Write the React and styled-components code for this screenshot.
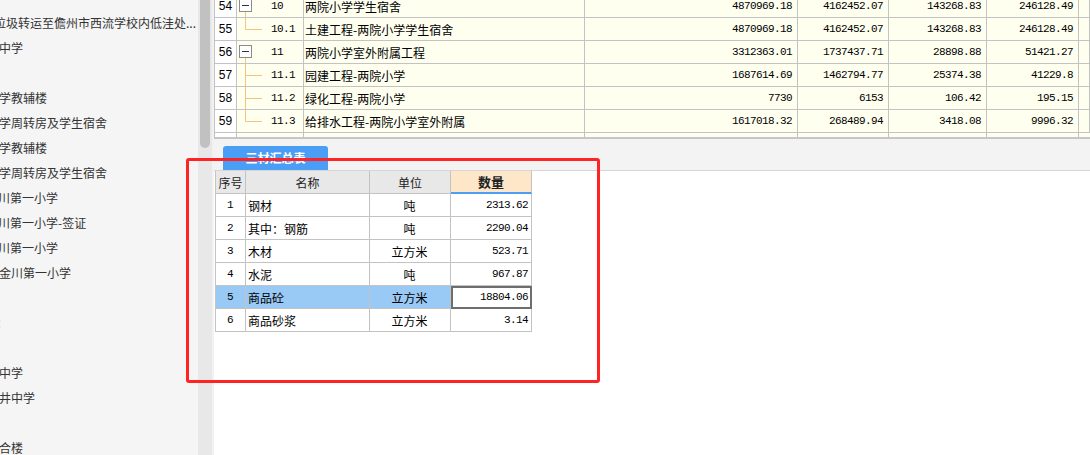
import React from 'react';
import styled, { createGlobalStyle } from 'styled-components';

const CJK = `"Noto Sans CJK SC", "Noto Sans", sans-serif`;
const MONO = `"Liberation Mono", "Noto Sans CJK SC", monospace`;
const GRID = '#c3c3c3';

const GlobalStyle = createGlobalStyle`
  html, body { margin: 0; padding: 0; background: #fff; }
  body { width: 1090px; height: 455px; overflow: hidden; font-family: ${CJK}; }
  * { box-sizing: border-box; }
`;

const Page = styled.div`
  position: relative;
  display: flex;
  width: 1090px;
  height: 455px;
  overflow: hidden;
`;

const Sidebar = styled.aside`
  width: 198px;
  height: 100%;
  flex-shrink: 0;
  background: #f5f5f5;
  overflow: hidden;
  padding-top: 10px;
`;

const SideItem = styled.div`
  height: 25px;
  font: 12px/25px ${CJK};
  color: ${p => (p.$accent ? '#3d8fe6' : '#333')};
  white-space: nowrap;
  margin-left: ${p => p.$indent || 0}px;
`;

const ScrollTrack = styled.div`
  width: 16px;
  height: 100%;
  flex-shrink: 0;
  background: #e8e8e8;
  border-right: 2px solid #f2f2f2;
  padding: 0 2px;
`;

const ScrollThumb = styled.div`
  height: 148px;
  background: #c1c1c1;
  border-radius: 0 0 5px 5px;
`;

const Main = styled.main`
  flex: 1;
  display: flex;
  flex-direction: column;
  background: #fff;
  min-width: 0;
`;

const TopPane = styled.section`
  height: 139px;
  flex-shrink: 0;
  overflow: hidden;
  background: #fffff0;
  border-left: 1px solid ${GRID};
  border-bottom: 2px solid #c6c6c6;
`;

const TopGrid = styled.div`
  margin-top: -5px;
  display: grid;
  grid-template-columns: 22px 67px 281px 213px 91px 98px 92px 1fr;
  grid-auto-rows: 23px;
`;

const Cell = styled.div`
  border-right: 1px solid ${GRID};
  border-bottom: 1px solid ${GRID};
  display: flex;
  align-items: center;
  white-space: nowrap;
  overflow: hidden;
  color: #000;
  &:last-child { border-right: none; }
`;

const RowNo = styled(Cell)`
  background: #fff;
  justify-content: center;
  font: 12px ${`"Liberation Sans", sans-serif`};
`;

const TreeCell = styled(Cell)`
  padding-left: 2px;
  font: 11px ${MONO};
  letter-spacing: -0.6px;
`;

const Code = styled.span`
  margin-left: 7px;
`;

const NameCell = styled(Cell)`
  padding-left: 1px;
  font: 12px ${CJK};
`;

const ValueCell = styled(Cell)`
  justify-content: flex-end;
  padding-right: 5px;
  font: 11px ${MONO};
  letter-spacing: -0.6px;
`;

const TabStrip = styled.div`
  height: 32px;
  flex-shrink: 0;
  background: #f3f3f3;
  border-bottom: 1px solid #d6d6d6;
  padding-left: 9px;
  display: flex;
  align-items: flex-end;
`;

const TabButton = styled.div`
  width: 105px;
  height: 24px;
  background: #4a9ef6;
  border-radius: 3px 3px 0 0;
  color: #fff;
  font: bold 12px/24px ${CJK};
  text-align: center;
`;

const BottomArea = styled.section`
  flex: 1;
  background: #fff;
`;

const SumTable = styled.div`
  margin-left: 1px;
  display: grid;
  grid-template-columns: 30px 124px 81px 81px;
  grid-auto-rows: 23px;
  width: max-content;
  border-left: 1px solid ${GRID};
`;

const HeadCell = styled.div`
  border-right: 1px solid ${GRID};
  border-bottom: ${p => (p.$active ? '2px solid #4a9ef6' : `1px solid ${GRID}`)};
  background: ${p => (p.$active ? '#fee7c9' : '#e8e8e8')};
  display: flex;
  align-items: center;
  justify-content: center;
  color: #222;
  font: ${p => (p.$active ? 'bold 13px' : '12px')} ${CJK};
`;

const DataCell = styled.div`
  border-right: 1px solid ${GRID};
  border-bottom: 1px solid ${GRID};
  background: ${p => (p.$selected ? '#99c9f5' : '#fff')};
  display: flex;
  align-items: center;
  justify-content: ${p => p.$align === 'right' ? 'flex-end' : p.$align === 'left' ? 'flex-start' : 'center'};
  padding: 0 3px 0 2px;
  color: #000;
  white-space: nowrap;
  font: ${p => (p.$mono ? `11px ${MONO}` : `12px ${CJK}`)};
  letter-spacing: ${p => (p.$mono ? '-0.6px' : '0')};
  outline: ${p => (p.$focus ? '2px solid #6e6e6e' : 'none')};
  outline-offset: -2px;
`;

const Annotation = styled.div`
  position: absolute;
  left: 186px;
  top: 158px;
  width: 414px;
  height: 225px;
  border: 3px solid #ff2323;
  border-radius: 3px;
  pointer-events: none;
`;

const LINE = '#f7c27c';

function TreeGuide({ kind }) {
  return (
    <svg width="25" height="22" viewBox="0 0 25 22" style={{ flexShrink: 0, display: 'block' }}>
      {kind === 'parent' && (
        <>
          <line x1="6.5" y1="17" x2="6.5" y2="22" stroke={LINE} />
          <rect x="0.5" y="4.5" width="12" height="12" fill="#fff" stroke="#8c8c8c" />
          <line x1="3" y1="10.5" x2="10" y2="10.5" stroke="#333" />
        </>
      )}
      {kind === 'mid' && (
        <>
          <line x1="6.5" y1="0" x2="6.5" y2="22" stroke={LINE} />
          <line x1="6.5" y1="11.5" x2="23" y2="11.5" stroke={LINE} />
        </>
      )}
      {kind === 'last' && (
        <>
          <line x1="6.5" y1="0" x2="6.5" y2="11.5" stroke={LINE} />
          <line x1="6.5" y1="11.5" x2="23" y2="11.5" stroke={LINE} />
        </>
      )}
    </svg>
  );
}

const sideItems = [
  { t: '垃圾转运至儋州市西流学校内低洼处...', i: -6 },
  { t: '中学', i: -1 },
  { t: '', i: 0 },
  { t: '学教辅楼', i: -1 },
  { t: '学周转房及学生宿舍', i: -1 },
  { t: '学教辅楼', i: -1 },
  { t: '学周转房及学生宿舍', i: -1 },
  { t: '川第一小学', i: -2 },
  { t: '川第一小学-签证', i: -2 },
  { t: '川第一小学', i: -2 },
  { t: '金川第一小学', i: -1 },
  { t: '', i: 0 },
  { t: '：', i: -4, accent: true },
  { t: '', i: 0 },
  { t: '中学', i: -1 },
  { t: '井中学', i: -1 },
  { t: '', i: 0 },
  { t: '合楼', i: -1 },
];

const topRows = [
  { no: 54, kind: 'parent', code: '10', name: '两院小学学生宿舍', v: ['4870969.18', '4162452.07', '143268.83', '246128.49'] },
  { no: 55, kind: 'last', code: '10.1', name: '土建工程-两院小学学生宿舍', v: ['4870969.18', '4162452.07', '143268.83', '246128.49'] },
  { no: 56, kind: 'parent', code: '11', name: '两院小学室外附属工程', v: ['3312363.01', '1737437.71', '28898.88', '51421.27'] },
  { no: 57, kind: 'mid', code: '11.1', name: '园建工程-两院小学', v: ['1687614.69', '1462794.77', '25374.38', '41229.8'] },
  { no: 58, kind: 'mid', code: '11.2', name: '绿化工程-两院小学', v: ['7730', '6153', '106.42', '195.15'] },
  { no: 59, kind: 'last', code: '11.3', name: '给排水工程-两院小学室外附属', v: ['1617018.32', '268489.94', '3418.08', '9996.32'] },
  { no: '', kind: 'none', code: '', name: '', v: ['', '', '', ''] },
];

const sumRows = [
  { n: '1', name: '钢材', unit: '吨', qty: '2313.62' },
  { n: '2', name: '其中：钢筋', unit: '吨', qty: '2290.04' },
  { n: '3', name: '木材', unit: '立方米', qty: '523.71' },
  { n: '4', name: '水泥', unit: '吨', qty: '967.87' },
  { n: '5', name: '商品砼', unit: '立方米', qty: '18804.06', selected: true },
  { n: '6', name: '商品砂浆', unit: '立方米', qty: '3.14' },
];

export default function App() {
  return (
    <Page>
      <GlobalStyle />
      <Sidebar>
        {sideItems.map((s, k) => (
          <SideItem key={k} $indent={s.i} $accent={s.accent}>{s.t || '\u00a0'}</SideItem>
        ))}
      </Sidebar>
      <ScrollTrack>
        <ScrollThumb />
      </ScrollTrack>
      <Main>
        <TopPane>
          <TopGrid>
            {topRows.map((r, k) => (
              <React.Fragment key={k}>
                <RowNo>{r.no}</RowNo>
                <TreeCell>
                  {r.kind !== 'none' && <TreeGuide kind={r.kind} />}
                  <Code>{r.code}</Code>
                </TreeCell>
                <NameCell>{r.name}</NameCell>
                {r.v.map((x, j) => (
                  <ValueCell key={j}>{x}</ValueCell>
                ))}
                <Cell />
              </React.Fragment>
            ))}
          </TopGrid>
        </TopPane>
        <TabStrip>
          <TabButton>三材汇总表</TabButton>
        </TabStrip>
        <BottomArea>
          <SumTable>
            <HeadCell>序号</HeadCell>
            <HeadCell>名称</HeadCell>
            <HeadCell>单位</HeadCell>
            <HeadCell $active>数量</HeadCell>
            {sumRows.map(r => (
              <React.Fragment key={r.n}>
                <DataCell $mono $selected={r.selected}>{r.n}</DataCell>
                <DataCell $align="left" $selected={r.selected}>{r.name}</DataCell>
                <DataCell $selected={r.selected}>{r.unit}</DataCell>
                <DataCell $mono $align="right" $focus={r.selected}>{r.qty}</DataCell>
              </React.Fragment>
            ))}
          </SumTable>
        </BottomArea>
      </Main>
      <Annotation />
    </Page>
  );
}
